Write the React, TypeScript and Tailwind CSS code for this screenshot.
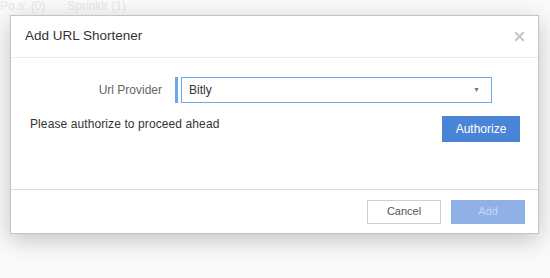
import { X } from 'lucide-react';

export default function App() {
  return (
    <div
      className="relative w-[550px] h-[278px] overflow-hidden bg-[#fafafa]"
      style={{ fontFamily: '"Liberation Sans", Arial, sans-serif' }}
    >
      {/* Page behind the overlay */}
      <div className="flex gap-[22px] text-[12px] leading-[16px] text-[#e6e6e6] -mt-[2px]">
        <span>Po.s: (0)</span>
        <span>Sprinklr (1)</span>
      </div>

      {/* Modal */}
      <div className="absolute left-[10px] top-[15px] w-[529px] h-[219px] bg-white border border-[#c4c4c4] shadow-[0_6px_22px_rgba(0,0,0,0.22)] flex flex-col">
        {/* Header */}
        <div className="h-[42px] flex items-center justify-between pl-[14px] pr-[11px] border-b border-[#ececec]">
          <h3 className="text-[13.5px] text-[#333]">Add URL Shortener</h3>
          <X className="w-[15px] h-[15px] text-[#c4c4c4]" strokeWidth={3} />
        </div>

        {/* Body */}
        <div className="flex-1 border-b border-[#dcdcdc] pt-[19px]">
          <div className="flex items-center h-[26px]">
            <label className="w-[151px] text-right text-[12px] text-[#666]">Url Provider</label>
            <div className="ml-[13px] w-[3px] h-[26px] bg-[#6daaec]" />
            <div className="ml-[3px] w-[311px] h-[26px] border border-[#6ea6f0] flex items-center justify-between pl-[7px] pr-[11px]">
              <span className="text-[12px] text-[#333]">Bitly</span>
              <span className="text-[7px] text-[#777]">▼</span>
            </div>
          </div>
          <div className="flex items-center justify-between mt-[13px] pl-[19px] pr-[18px]">
            <span className="text-[12px] text-[#333] tracking-[0.1px] -mt-[10px]">Please authorize to proceed ahead</span>
            <button className="w-[78px] h-[26px] bg-[#4a84d6] text-white text-[12px]">Authorize</button>
          </div>
        </div>

        {/* Footer */}
        <div className="h-[43px] flex items-center justify-end gap-[10px] pr-[13px]">
          <button className="w-[74px] h-[24px] border border-[#cfcfcf] bg-white text-[11px] text-[#555]">Cancel</button>
          <button className="w-[74px] h-[24px] bg-[#8fb1e6] text-[11px] text-[#c6d7f2]">Add</button>
        </div>
      </div>
    </div>
  );
}
